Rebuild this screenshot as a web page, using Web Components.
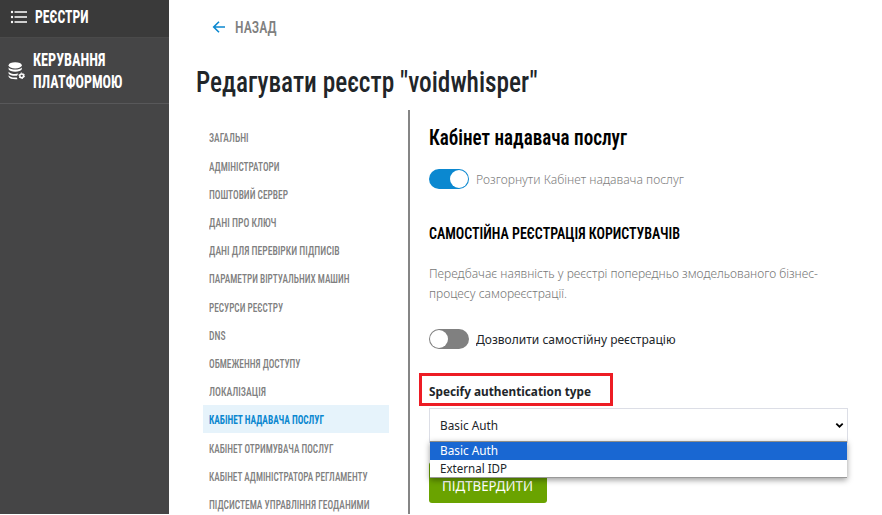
<!DOCTYPE html>
<html lang="uk">
<head>
<meta charset="utf-8">
<title>Редагувати реєстр</title>
<style>
html, body { margin: 0; height: 515px; overflow: hidden; background: #fff; }
body { font-family: "Noto Sans", "Open Sans", sans-serif; color: #212529; }
</style>
</head>
<body>
<registry-page></registry-page>
<script>
const define = (name, html, setup) => customElements.define(name, class extends HTMLElement {
  connectedCallback() {
    if (this.shadowRoot) return;
    this.attachShadow({ mode: 'open' }).innerHTML = html;
    if (setup) setup(this, this.shadowRoot);
  }
});

/* One line of text condensed or widened to the width in its "w" attribute. */
define('fit-text', `<style>
  :host { display: block; white-space: nowrap; flex: none; }
  :host([face="display"]) { font-family: Roboto, "Noto Sans", sans-serif; font-stretch: 75%; }
  span { display: inline-block; transform-origin: 0 50%; vertical-align: top; }
</style><span><slot></slot></span>`, (el, root) => {
  const w = +el.getAttribute('w'), span = root.querySelector('span');
  el.style.width = w + 'px';
  span.style.transform = 'scaleX(' + w / span.getBoundingClientRect().width + ')';
});

define('side-bar', `<style>
  :host { display: block; width: 169px; height: 514px; background: #454546; color: #fff; flex: none; box-sizing: border-box; }
  .row { display: flex; align-items: center; box-sizing: border-box; font-weight: 700; }
  .one { height: 38px; background: #3a3a3a; padding: 0 0 4px 10px; gap: 8px; border-bottom: 1px solid #4a4a4a; }
  .two { height: 66px; padding: 0 0 0 8px; gap: 8px; border-bottom: 1px solid #58585a; }
  fit-text { font-size: 17.500px; line-height: 22px; }
</style>
<div class="row one">
  <svg width="17" height="14" viewBox="0 0 17 14" fill="#fff"><circle cx="2" cy="2" r="1.2"/><circle cx="2" cy="7" r="1.2"/><circle cx="2" cy="12" r="1.2"/><path d="M4.500 1.300H17v1.400H4.500zM4.500 6.300H17v1.400H4.500zM4.500 11.300H17v1.400H4.500z"/></svg>
  <fit-text face="display" w="53.500">РЕЄСТРИ</fit-text>
</div>
<div class="row two">
  <svg width="17" height="18" viewBox="0 0 17 18" fill="#fff"><ellipse cx="7.200" cy="3.300" rx="6.600" ry="3.100"/><path d="M.6 5.500C2.600 8.300 11.800 8.300 13.800 5.500V7.300C12.800 10.500 1.600 10.500.6 7.300zM.6 9.700C2.300 12 7 12.400 10.300 11.600L9 13.700C5.500 14.200 1.400 13.300.6 11.400zM.6 13.200C2 15.200 5.500 15.900 8.800 15.400L9.500 17.200C5.500 17.600 1.200 16.800.6 14.800z"/><circle cx="13.700" cy="13.800" r="1.900" fill="none" stroke="#fff" stroke-width="1.500"/><circle cx="13.700" cy="13.800" r="2.800" fill="none" stroke="#fff" stroke-width="1" stroke-dasharray="1.470 1.470"/></svg>
  <div><fit-text face="display" w="72.500">КЕРУВАННЯ</fit-text><fit-text face="display" w="89.500">ПЛАТФОРМОЮ</fit-text></div>
</div>`);

define('nav-item', `<style>
  :host { display: flex; align-items: center; height: 28.2px; padding-left: 6px; box-sizing: border-box; color: #808080; font-size: 12px; font-weight: 500; line-height: 16px; }
  :host([active]) { background: #e6f3fb; color: #0b88d0; font-weight: 700; }
  fit-text { padding-top: 1px; }
</style><slot></slot>`);

define('section-nav', `<style>
  :host { display: block; width: 186px; padding: 13.100px 19px 0 6px; }
</style><div></div>`, (el, root) => {
  const items = [['ЗАГАЛЬНІ', 39.5], ['АДМІНІСТРАТОРИ', 70.5], ['ПОШТОВИЙ СЕРВЕР', 79], ['ДАНІ ПРО КЛЮЧ', 67.5], ['ДАНІ ДЛЯ ПЕРЕВІРКИ ПІДПИСІВ', 130.5], ['ПАРАМЕТРИ ВІРТУАЛЬНИХ МАШИН', 140.5], ['РЕСУРСИ РЕЄСТРУ', 74], ['DNS', 16.5], ['ОБМЕЖЕННЯ ДОСТУПУ', 91.5], ['ЛОКАЛІЗАЦІЯ', 57], ['КАБІНЕТ НАДАВАЧА ПОСЛУГ', 115, 1], ['КАБІНЕТ ОТРИМУВАЧА ПОСЛУГ', 124.5], ['КАБІНЕТ АДМІНІСТРАТОРА РЕГЛАМЕНТУ', 158.5], ['ПІДСИСТЕМА УПРАВЛІННЯ ГЕОДАНИМИ', 160.5]];
  root.querySelector('div').innerHTML = items.map(([t, w, a]) => `<nav-item ${a ? 'active' : ''}><fit-text face="display" w="${w}" style="padding-top:2.5px">${t}</fit-text></nav-item>`).join('');
});

define('toggle-switch', `<style>
  :host { display: flex; align-items: center; gap: 7px; height: 20px; font-size: 13px; line-height: 20px; color: #212529; }
  i { width: 40px; height: 20px; border-radius: 10px; background: #808080; padding: 1px; box-sizing: border-box; display: flex; }
  i::before { content: ""; width: 18px; height: 18px; border-radius: 50%; background: #fff; }
  :host([on]) { color: #808080; font-weight: 300; }
  :host([on]) i { background: #0b88d0; justify-content: flex-end; }
</style><i></i><slot></slot>`);

define('auth-select', `<style>
  :host { display: block; position: relative; width: 417px; height: 33px; border: 1px solid #dcdee6; background: #fff; font-size: 12.500px; }
  .value { display: flex; align-items: center; justify-content: space-between; height: 33px; padding: 0 3px 0 10px; line-height: 18px; }
  .list { position: absolute; z-index: 2; left: 0; top: 32px; width: 417px; height: 37px; box-sizing: border-box; background: #fff; border-top: 1px solid #8d8d88; border-bottom: 1px solid #999; box-shadow: 0 2px 6px rgba(0,0,0,.4); }
  .opt { height: 17.500px; line-height: 17.500px; padding-left: 10px; }
  .sel { background: #1967d2; color: #fff; }
</style>
<div class="value"><fit-text w="58">Basic Auth</fit-text><svg width="9" height="7" viewBox="0 0 9 7"><path d="M1.300 1.700 4.500 4.700 7.700 1.700" fill="none" stroke="#000" stroke-width="1.800"/></svg></div>
<div class="list"><div class="opt sel"><fit-text w="58">Basic Auth</fit-text></div><div class="opt"><fit-text w="67">External IDP</fit-text></div></div>`);

define('registry-form', `<style>
  :host { display: block; height: 404px; box-sizing: border-box; border-left: 2px solid #858585; padding-left: 19px; flex: 1; }
  h2, h3, p { margin: 0; }
  h2 { color: #000; font-size: 22px; font-weight: 600; line-height: 28px; padding-top: 14px; height: 45px; }
  h3 { color: #000; font-size: 16.500px; font-weight: 600; line-height: 22px; padding-top: 34px; height: 40px; }
  p { color: #777; font-size: 13px; font-weight: 300; line-height: 20px; height: 66px; }
  .label { margin: 24px 0 2px -10px; width: 194px; height: 33px; box-sizing: border-box; border: 3px solid #ed1c24; padding: 4px 0 0 7px; font-size: 12.500px; font-weight: 700; line-height: 24px; }
  .submit { width: 118px; height: 41px; margin-top: 19px; border-radius: 3px; background: #6aa300; color: #fff; box-sizing: border-box; padding: 14px 0 0 13px; font-size: 14px; line-height: 20px; }
</style>
<h2><fit-text face="display" w="198">Кабінет надавача послуг</fit-text></h2>
<toggle-switch on><fit-text w="208">Розгорнути Кабінет надавача послуг</fit-text></toggle-switch>
<h3><fit-text face="display" w="251">САМОСТІЙНА РЕЄСТРАЦІЯ КОРИСТУВАЧІВ</fit-text></h3>
<p><fit-text w="389">Передбачає наявність у реєстрі попередньо змодельованого бізнес-</fit-text><fit-text w="138">процесу самореєстрації.</fit-text></p>
<toggle-switch><fit-text w="199.500">Дозволити самостійну реєстрацію</fit-text></toggle-switch>
<div class="label"><fit-text w="162">Specify authentication type</fit-text></div>
<auth-select></auth-select>
<div class="submit"><fit-text w="91">ПІДТВЕРДИТИ</fit-text></div>`);

define('registry-page', `<style>
  :host { display: flex; height: 515px; }
  main { flex: 1; padding-left: 28px; }
  .back { display: flex; align-items: center; gap: 9px; padding: 16px 0 0 15px; height: 22px; color: #808080; font-size: 17px; font-weight: 500; line-height: 22px; }
  h1 { margin: 0 0 0 -1px; padding-top: 26px; height: 46px; font-size: 29px; line-height: 37px; font-weight: 500; color: #212529; }
  .cols { display: flex; }
</style>
<side-bar></side-bar>
<main>
  <div class="back"><svg width="14" height="14" viewBox="0 0 14 14" fill="none" stroke="#0b88d0" stroke-width="1.600"><path d="M13 7H2M7 1.700 1.700 7 7 12.300"/></svg><fit-text face="display" w="41.500">НАЗАД</fit-text></div>
  <h1><fit-text face="display" w="341.500">Редагувати реєстр "voidwhisper"</fit-text></h1>
  <div class="cols"><section-nav></section-nav><registry-form></registry-form></div>
</main>`);
</script>
</body>
</html>
